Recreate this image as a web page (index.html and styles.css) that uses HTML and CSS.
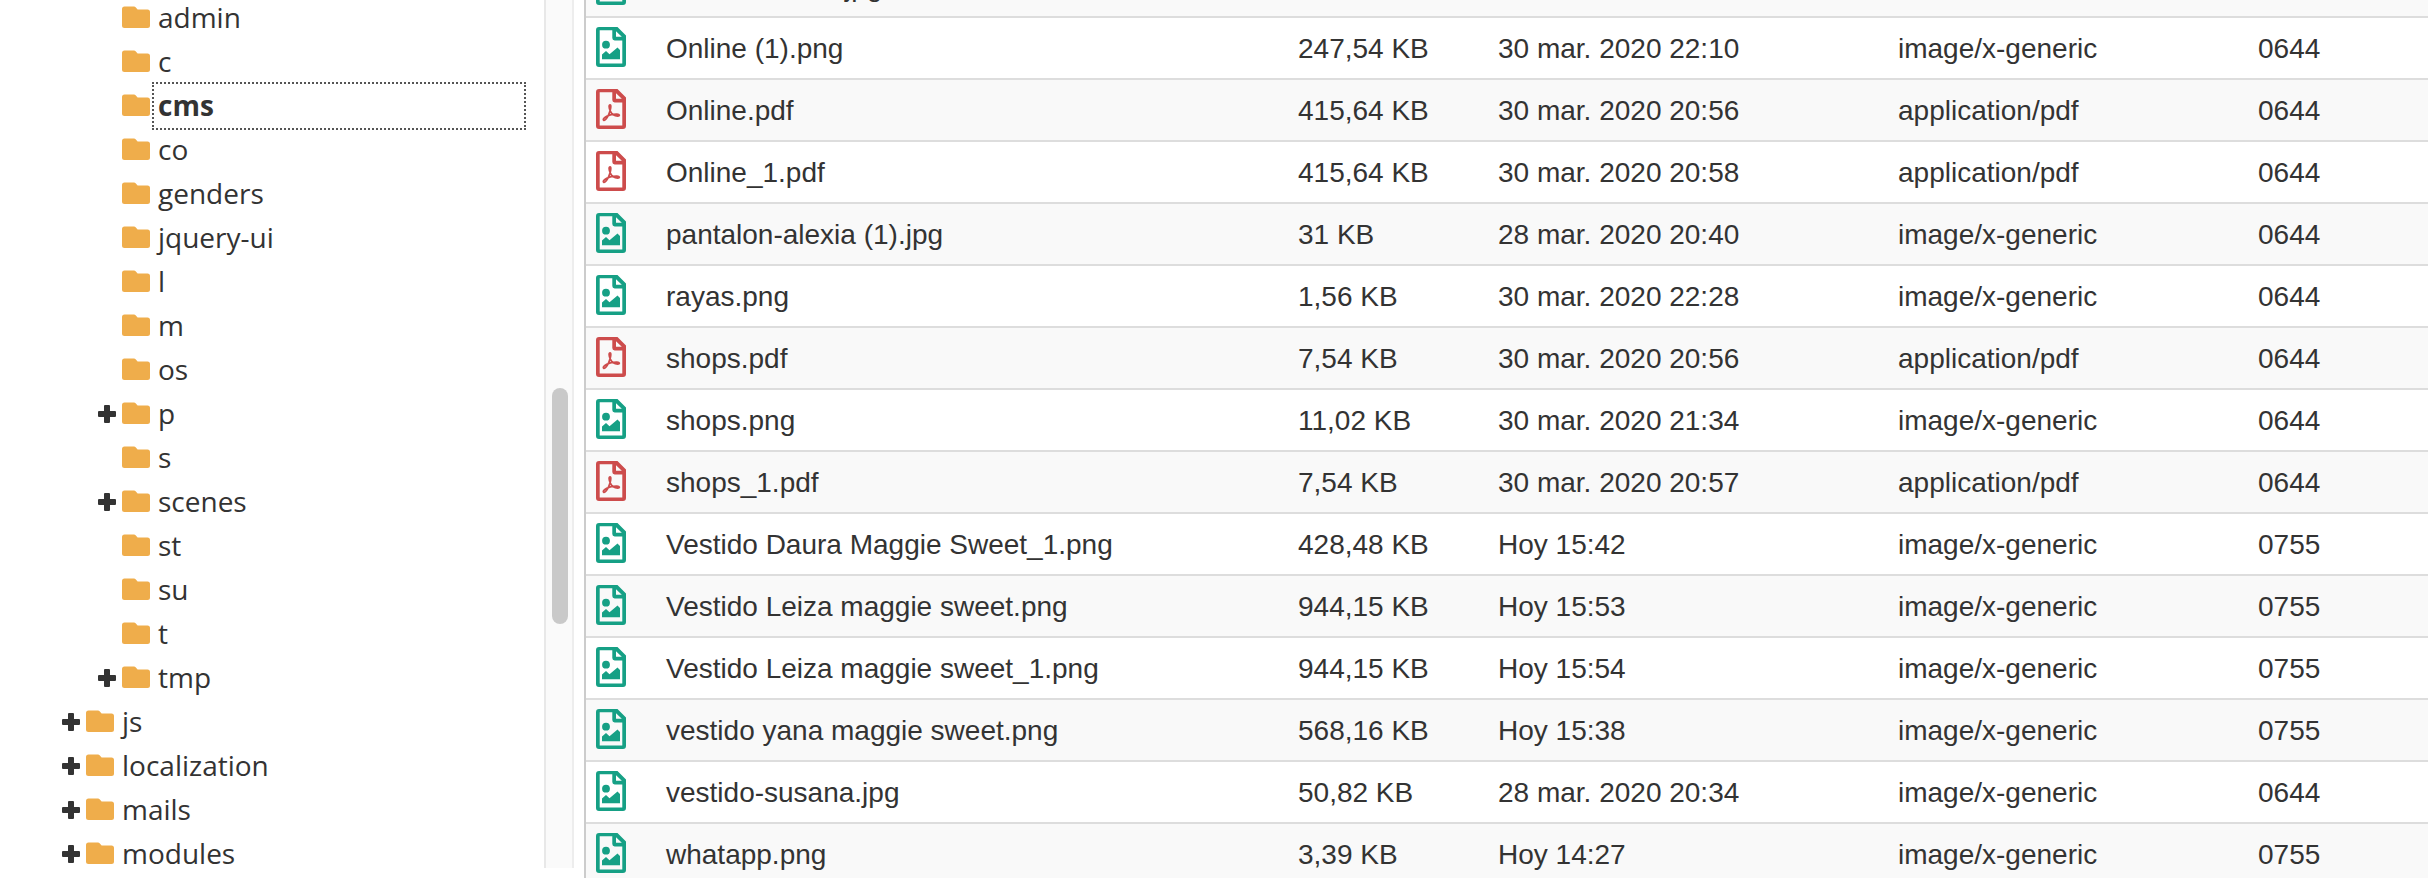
FILE: index.html
```
<!doctype html>
<html lang="es">
<head>
<meta charset="utf-8">
<title>File Manager</title>
<link rel="stylesheet" href="styles.css">
</head>
<body>

<svg class="defs">
  <symbol id="folder" viewBox="0 0 28 22">
    <path d="M2.500 0.500h9.500q1 0 1.600.8l2 2.200h9.900q2.500 0 2.500 2.500v13.500q0 2.500-2.500 2.500h-23q-2.500 0-2.500-2.500v-16.500q0-2.500 2.500-2.500z"/>
  </symbol>
  <symbol id="plus" viewBox="0 0 18 18">
    <path d="M7 0h4q1 0 1 1v5h5q1 0 1 1v4q0 1-1 1h-5v5q0 1-1 1h-4q-1 0-1-1v-5h-5q-1 0-1-1v-4q0-1 1-1h5v-5q0-1 1-1z"/>
  </symbol>
  <symbol id="image" viewBox="0 0 30 40">
    <path fill-rule="evenodd" d="M3 0h18.500l8.500 8.500v28.500q0 3-3 3h-24q-3 0-3-3v-34q0-3 3-3zM3.700 3.300v33.100h22.600v-23h-7.600q-2.400 0-2.400-2.400v-7.700zM20 4.200v5.500h5.800z"/>
    <circle cx="10" cy="17.700" r="3.900"/>
    <path d="M6 32.300v-4.800l4-3.500 3.500 3.300 8-6.800 2.500 2.500v9.300z"/>
  </symbol>
  <symbol id="pdf" viewBox="0 0 30 40">
    <path fill-rule="evenodd" d="M3 0h18.500l8.500 8.500v28.500q0 3-3 3h-24q-3 0-3-3v-34q0-3 3-3zM3.700 3.300v33.100h22.600v-23h-7.600q-2.400 0-2.400-2.400v-7.700zM20 4.200v5.500h5.800z"/>
    <path class="line" d="M14.200 15.800c-1.600 0-1.200 3.200.1 6.200 1.700 3.700 4.700 5 7.400 5 2.400 0 2-1.800-.7-1.900-3.700-.1-7.500.7-10.300 2.200-2.800 1.500-4 3.300-3 3.900 1.200.7 3.300-2.100 5-5.600 1.700-3.500 2.800-9.800 1.500-9.800z"/>
  </symbol>
</svg>

<div class="manager">
  <ul class="tree">
    <li><svg class="folder"><use href="#folder"/></svg><span>admin</span></li>
    <li><svg class="folder"><use href="#folder"/></svg><span>c</span></li>
    <li><svg class="folder"><use href="#folder"/></svg><span class="selected">cms</span></li>
    <li><svg class="folder"><use href="#folder"/></svg><span>co</span></li>
    <li><svg class="folder"><use href="#folder"/></svg><span>genders</span></li>
    <li><svg class="folder"><use href="#folder"/></svg><span>jquery-ui</span></li>
    <li><svg class="folder"><use href="#folder"/></svg><span>l</span></li>
    <li><svg class="folder"><use href="#folder"/></svg><span>m</span></li>
    <li><svg class="folder"><use href="#folder"/></svg><span>os</span></li>
    <li class="closed"><svg class="plus"><use href="#plus"/></svg><svg class="folder"><use href="#folder"/></svg><span>p</span></li>
    <li><svg class="folder"><use href="#folder"/></svg><span>s</span></li>
    <li class="closed"><svg class="plus"><use href="#plus"/></svg><svg class="folder"><use href="#folder"/></svg><span>scenes</span></li>
    <li><svg class="folder"><use href="#folder"/></svg><span>st</span></li>
    <li><svg class="folder"><use href="#folder"/></svg><span>su</span></li>
    <li><svg class="folder"><use href="#folder"/></svg><span>t</span></li>
    <li class="closed"><svg class="plus"><use href="#plus"/></svg><svg class="folder"><use href="#folder"/></svg><span>tmp</span></li>
    <li class="closed top"><svg class="plus"><use href="#plus"/></svg><svg class="folder"><use href="#folder"/></svg><span>js</span></li>
    <li class="closed top"><svg class="plus"><use href="#plus"/></svg><svg class="folder"><use href="#folder"/></svg><span>localization</span></li>
    <li class="closed top"><svg class="plus"><use href="#plus"/></svg><svg class="folder"><use href="#folder"/></svg><span>mails</span></li>
    <li class="closed top"><svg class="plus"><use href="#plus"/></svg><svg class="folder"><use href="#folder"/></svg><span>modules</span></li>
  </ul>
  <div class="scrollbar"><div class="thumb"></div></div>
  <div class="files">
    <div class="row"><svg class="image"><use href="#image"/></svg><span>modelo-verde.jpg</span><span></span><span></span><span></span><span></span></div>
    <div class="row"><svg class="image"><use href="#image"/></svg><span>Online (1).png</span><span>247,54 KB</span><span>30 mar. 2020 22:10</span><span>image/x-generic</span><span>0644</span></div>
    <div class="row"><svg class="pdf"><use href="#pdf"/></svg><span>Online.pdf</span><span>415,64 KB</span><span>30 mar. 2020 20:56</span><span>application/pdf</span><span>0644</span></div>
    <div class="row"><svg class="pdf"><use href="#pdf"/></svg><span>Online_1.pdf</span><span>415,64 KB</span><span>30 mar. 2020 20:58</span><span>application/pdf</span><span>0644</span></div>
    <div class="row"><svg class="image"><use href="#image"/></svg><span>pantalon-alexia (1).jpg</span><span>31 KB</span><span>28 mar. 2020 20:40</span><span>image/x-generic</span><span>0644</span></div>
    <div class="row"><svg class="image"><use href="#image"/></svg><span>rayas.png</span><span>1,56 KB</span><span>30 mar. 2020 22:28</span><span>image/x-generic</span><span>0644</span></div>
    <div class="row"><svg class="pdf"><use href="#pdf"/></svg><span>shops.pdf</span><span>7,54 KB</span><span>30 mar. 2020 20:56</span><span>application/pdf</span><span>0644</span></div>
    <div class="row"><svg class="image"><use href="#image"/></svg><span>shops.png</span><span>11,02 KB</span><span>30 mar. 2020 21:34</span><span>image/x-generic</span><span>0644</span></div>
    <div class="row"><svg class="pdf"><use href="#pdf"/></svg><span>shops_1.pdf</span><span>7,54 KB</span><span>30 mar. 2020 20:57</span><span>application/pdf</span><span>0644</span></div>
    <div class="row"><svg class="image"><use href="#image"/></svg><span>Vestido Daura Maggie Sweet_1.png</span><span>428,48 KB</span><span>Hoy 15:42</span><span>image/x-generic</span><span>0755</span></div>
    <div class="row"><svg class="image"><use href="#image"/></svg><span>Vestido Leiza maggie sweet.png</span><span>944,15 KB</span><span>Hoy 15:53</span><span>image/x-generic</span><span>0755</span></div>
    <div class="row"><svg class="image"><use href="#image"/></svg><span>Vestido Leiza maggie sweet_1.png</span><span>944,15 KB</span><span>Hoy 15:54</span><span>image/x-generic</span><span>0755</span></div>
    <div class="row"><svg class="image"><use href="#image"/></svg><span>vestido yana maggie sweet.png</span><span>568,16 KB</span><span>Hoy 15:38</span><span>image/x-generic</span><span>0755</span></div>
    <div class="row"><svg class="image"><use href="#image"/></svg><span>vestido-susana.jpg</span><span>50,82 KB</span><span>28 mar. 2020 20:34</span><span>image/x-generic</span><span>0644</span></div>
    <div class="row"><svg class="image"><use href="#image"/></svg><span>whatapp.png</span><span>3,39 KB</span><span>Hoy 14:27</span><span>image/x-generic</span><span>0755</span></div>
  </div>
</div>

</body>
</html>
```
FILE: styles.css
```
* {
  box-sizing: border-box;
}
body {
  margin: 0;
  background: #fff;
  color: #333;
  overflow: hidden;
}
.defs {
  display: none;
}
.manager {
  display: flex;
  height: 878px;
  overflow: hidden;
}

/* directory tree */
.tree {
  width: 544px;
  margin: -4px 0 0;
  padding: 0 20px 0 0;
  list-style: none;
  font-family: "Open Sans", sans-serif;
  font-size: 28px;
  line-height: 42px;
}
.tree li {
  display: flex;
  height: 44px;
  padding-left: 122px;
}
.tree .closed {
  padding-left: 98px;
}
.tree .top {
  padding-left: 62px;
}
.tree span {
  flex: 1;
  margin-left: 4px;
  padding-left: 4px;
}
.tree .selected {
  font-weight: bold;
  outline: 2px dotted #555;
}
.folder {
  width: 28px;
  height: 22px;
  margin-top: 10px;
  fill: #efad4b;
}
.plus {
  width: 18px;
  height: 18px;
  margin: 13px 6px 0 0;
  fill: #333;
}

.scrollbar {
  width: 30px;
  height: 868px;
  margin-right: 10px;
  padding: 388px 4px 0 6px;
  background: #fafafa;
  border-left: 2px solid #e8e8e8;
  border-right: 2px solid #ededed;
}
.thumb {
  width: 16px;
  height: 236px;
  border-radius: 8px;
  background: #c9c9c9;
}

/* file listing */
.files {
  flex: 1;
  margin-top: -44px;
  border-left: 2px solid #ccc;
  font-family: "Liberation Sans", Arial, sans-serif;
  font-size: 28px;
}
.row {
  display: grid;
  grid-template-columns: 70px 632px 200px 400px 360px 1fr;
  height: 62px;
  padding-left: 10px;
  border-bottom: 2px solid #ddd;
  line-height: 62px;
}
.row:nth-child(odd) {
  background: #f9f9f9;
}
.row svg {
  width: 30px;
  height: 40px;
  margin-top: 9px;
}
.image {
  fill: #16a085;
}
.pdf {
  fill: #cd4c4c;
}
.line {
  fill: none;
  stroke: #cd4c4c;
  stroke-width: 1.800;
}
```
